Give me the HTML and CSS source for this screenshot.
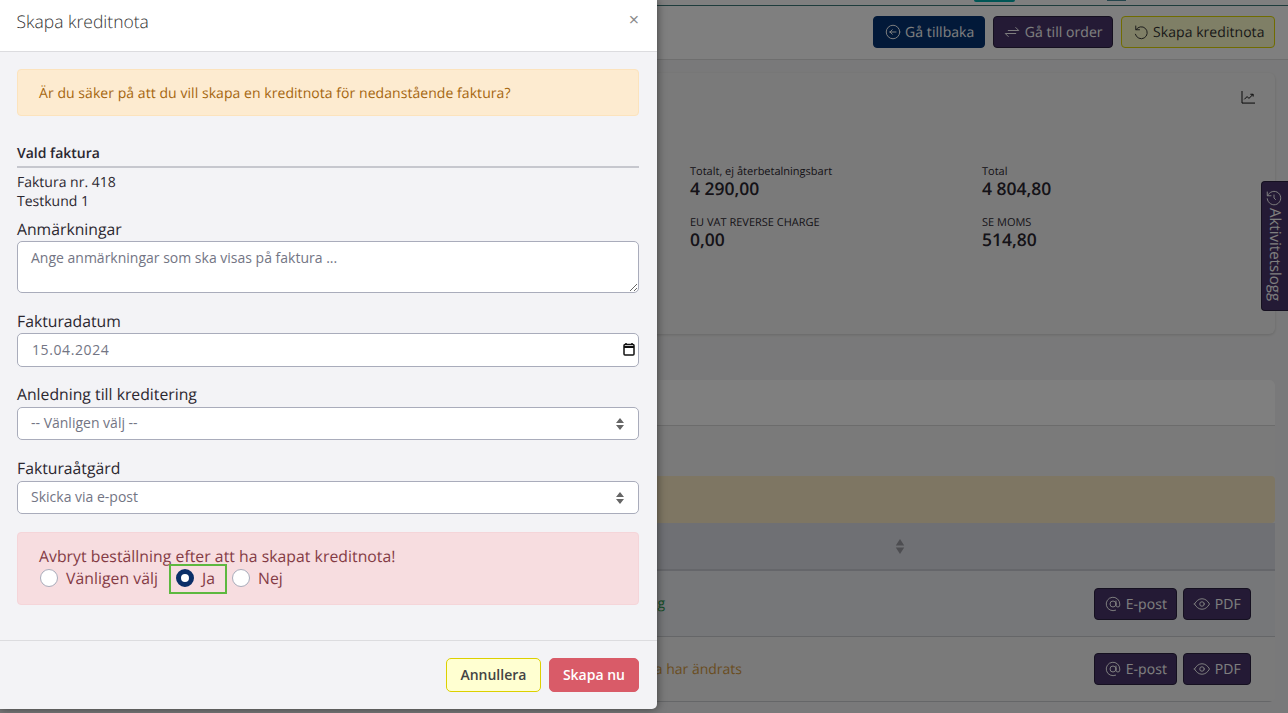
FILE: index.html
```html
<!DOCTYPE html>
<html>
<head>
    <title>Skapa kreditnota</title>
    <link rel="stylesheet" href="styles.css">
</head>
<body>
    <div class="page">
        <div class="topbar">
            <span class="top-pill"></span>
            <span class="top-avatar"></span>
        </div>

        <div class="toolbar">
            <a class="btn btn-navy">
                <svg class="icon" viewBox="0 0 24 24"><circle cx="12" cy="12" r="9"/><path d="M8 12h8M8 12l3-3M8 12l3 3"/></svg>
                Gå tillbaka
            </a>
            <a class="btn btn-purple">
                <svg class="icon" viewBox="0 0 24 24"><path d="M7 10h14l-4-4"/><path d="M17 14H3l4 4"/></svg>
                Gå till order
            </a>
            <a class="btn btn-yellow">
                <svg class="icon" viewBox="0 0 24 24"><path d="M5 4v5h5"/><path d="M5.300 9A8 8 0 1 1 4.500 15"/></svg>
                Skapa kreditnota
            </a>
        </div>

        <div class="card summary">
            <svg class="chart-icon" viewBox="0 0 16 14"><path d="M1 0v13h14"/><path d="M3.500 9l3-3 2 2 4-4M10 3.500h3V6"/></svg>
            <div class="stats">
                <div class="stat">
                    <div class="stat-label">Totalt, ej återbetalningsbart</div>
                    <div class="stat-value">4 290,00</div>
                </div>
                <div class="stat">
                    <div class="stat-label">Total</div>
                    <div class="stat-value">4 804,80</div>
                </div>
                <div class="stat">
                    <div class="stat-label">EU VAT REVERSE CHARGE</div>
                    <div class="stat-value">0,00</div>
                </div>
                <div class="stat">
                    <div class="stat-label">SE MOMS</div>
                    <div class="stat-value">514,80</div>
                </div>
            </div>
        </div>

        <div class="card list">
            <div class="list-header"></div>
            <div class="list-gap"></div>
            <div class="list-warning"></div>
            <div class="list-head">
                <svg class="sort-icon" viewBox="0 0 10 16"><path d="M5 0l4.500 7h-9zM5 16l-4.500-7h9z"/></svg>
            </div>
            <div class="list-row row-first">
                <span class="status status-ok">Betalning</span>
                <a class="btn btn-purple">
                    <svg class="icon" viewBox="0 0 24 24"><circle cx="12" cy="12" r="4"/><path d="M16 8v5.500a2.500 2.500 0 0 0 5 0V12a9 9 0 1 0-5.500 8.300"/></svg>
                    E-post
                </a>
                <a class="btn btn-purple">
                    <svg class="icon" viewBox="0 0 24 24"><circle cx="12" cy="12" r="3"/><path d="M2 12c2.500-4.500 6-7 10-7s7.500 2.500 10 7c-2.500 4.500-6 7-10 7s-7.500-2.500-10-7z"/></svg>
                    PDF
                </a>
            </div>
            <div class="list-row row-second">
                <span class="status status-warn">Data har ändrats</span>
                <a class="btn btn-purple">
                    <svg class="icon" viewBox="0 0 24 24"><circle cx="12" cy="12" r="4"/><path d="M16 8v5.500a2.500 2.500 0 0 0 5 0V12a9 9 0 1 0-5.500 8.300"/></svg>
                    E-post
                </a>
                <a class="btn btn-purple">
                    <svg class="icon" viewBox="0 0 24 24"><circle cx="12" cy="12" r="3"/><path d="M2 12c2.500-4.500 6-7 10-7s7.500 2.500 10 7c-2.500 4.500-6 7-10 7s-7.500-2.500-10-7z"/></svg>
                    PDF
                </a>
            </div>
        </div>
    </div>

    <div class="log-tab">
        <svg class="icon" viewBox="0 0 24 24"><path d="M12 8v4l2 2"/><path d="M3 4v5h5"/><path d="M3.500 9A9 9 0 1 1 3 13"/></svg>
        Aktivitetslogg
    </div>

    <div class="backdrop"></div>

    <div class="modal">
        <div class="modal-header">
            <h5>Skapa kreditnota</h5>
            <span class="modal-close">×</span>
        </div>

        <div class="modal-body">
            <div class="alert alert-warning">Är du säker på att du vill skapa en kreditnota för nedanstående faktura?</div>

            <div class="picked-title">Vald faktura</div>
            <div class="picked-info">
                Faktura nr. 418<br>
                Testkund 1
            </div>

            <label class="field-label field-first" for="notes">Anmärkningar</label>
            <textarea id="notes" class="field field-notes" placeholder="Ange anmärkningar som ska visas på faktura ..."></textarea>

            <label class="field-label" for="date">Fakturadatum</label>
            <div class="date-wrap">
                <input id="date" class="field field-date" type="text" value="15.04.2024">
                <svg class="date-icon" viewBox="0 0 12 13"><path d="M3 0v2M9 0v2"/><rect x="1" y="1.500" width="10" height="10.500" rx="1"/><path class="date-bar" d="M1 4h10"/></svg>
            </div>

            <label class="field-label" for="reason">Anledning till kreditering</label>
            <select id="reason" class="field field-select">
                <option>-- Vänligen välj --</option>
            </select>

            <label class="field-label" for="action">Fakturaåtgärd</label>
            <select id="action" class="field field-select">
                <option>Skicka via e-post</option>
            </select>

            <div class="alert alert-danger">
                <div>Avbryt beställning efter att ha skapat kreditnota!</div>
                <div class="radio-row">
                    <label class="radio"><input type="radio" name="cancel"> Vänligen välj</label>
                    <label class="radio radio-marked"><input type="radio" name="cancel" checked> Ja</label>
                    <label class="radio"><input type="radio" name="cancel"> Nej</label>
                </div>
            </div>
        </div>

        <div class="modal-footer">
            <button class="modal-btn modal-btn-cancel">Annullera</button>
            <button class="modal-btn modal-btn-create">Skapa nu</button>
        </div>
    </div>
</body>
</html>
```

FILE: styles.css
```css
* {
    box-sizing: border-box;
}

html, body {
    height: 100%;
}

body {
    margin: 0;
    height: 713px;
    overflow: hidden;
    font-family: "Open Sans", sans-serif;
    font-size: 14px;
    color: #2b2730;
    background-color: #f3f3f4;
    text-rendering: geometricPrecision;
}

.icon {
    width: 18px;
    height: 18px;
    fill: none;
    stroke: currentColor;
    stroke-width: 1.3;
    stroke-linecap: round;
    stroke-linejoin: round;
    flex: none;
}

/* page behind the dialog */
.topbar {
    height: 6px;
    display: flex;
    align-items: flex-start;
    padding-left: 974px;
    background-color: #fff;
    border-bottom: 1px solid #3c7878;
}

.top-pill {
    width: 41px;
    height: 2px;
    background-color: #0aa;
    border-radius: 0 0 3px 3px;
}

.top-avatar {
    width: 19px;
    height: 1px;
    margin-left: 92px;
    background-color: #4a8a98;
}

.toolbar {
    height: 54px;
    display: flex;
    justify-content: flex-end;
    gap: 8px;
    padding: 10px 13px 0 0;
    background-color: #fff;
    border-bottom: 1px solid #ddd;
}

.btn {
    height: 32px;
    display: inline-flex;
    align-items: center;
    gap: 3.5px;
    padding: 2px 9.5px 0;
    border: 1px solid;
    border-radius: 4px;
    font-size: 14px;
    line-height: 26px;
    letter-spacing: 0.05px;
    white-space: nowrap;
}

.btn .icon {
    margin-bottom: 2px;
}

.btn-navy {
    background-color: #053372;
    border-color: #053372;
    color: #fff;
}

.btn-purple {
    background-color: #48356a;
    border-color: #2b2040;
    color: #fff;
}

.btn-yellow {
    background-color: #ffffcc;
    border-color: #e0d800;
    color: #333;
}

.card {
    margin: 0 13px 0 0;
    background-color: #f5f5f5;
    border-radius: 6px;
}

.summary {
    position: relative;
    height: 261px;
    margin-top: 13px;
    padding: 91px 0 0 690px;
    box-shadow: 0 1px 3px rgba(0,0,0,0.15);
}

.chart-icon {
    position: absolute;
    top: 18px;
    right: 19px;
    width: 15px;
    height: 13px;
    fill: none;
    stroke: #000;
    stroke-width: 1;
}

.stats {
    display: grid;
    grid-template-columns: 292px 292px;
    row-gap: 15px;
}

.stat-label {
    font-size: 11px;
    line-height: 15px;
}

.stat-value {
    font-size: 17.5px;
    font-weight: 600;
    line-height: 21px;
}

.list {
    margin-top: 46px;
    overflow: hidden;
}

.list-header {
    height: 46px;
    background-color: #fff;
    border-bottom: 1px solid #d8d8d8;
}

.list-gap {
    height: 50px;
}

.list-warning {
    height: 47px;
    background-color: #fcecc6;
    border-radius: 4px;
}

.list-head {
    height: 48px;
    display: flex;
    align-items: center;
    padding-left: 895px;
    background-color: #dee0e8;
    border-bottom: 2px solid #cbccd4;
}

.sort-icon {
    width: 10px;
    height: 15px;
    fill: #9a9ba2;
}

.list-row {
    height: 65px;
    display: flex;
    align-items: center;
    justify-content: flex-end;
    gap: 6px;
    padding-right: 24px;
    background-color: #f4f4f5;
    border-bottom: 1px solid #cbccd0;
}

.row-first {
    height: 66px;
    background-color: #eceef2;
}

.status {
    margin-right: auto;
    text-align: right;
}

.row-first .status {
    width: 665px;
}

.row-second .status {
    width: 742px;
}

.status-ok {
    color: #2a9a50;
}

.status-warn {
    color: #d49a40;
}

.list-row .btn {
    padding: 2px 9.2px 0;
}

.log-tab {
    position: absolute;
    top: 181px;
    right: 0;
    width: 27px;
    height: 130px;
    display: flex;
    align-items: center;
    gap: 1px;
    padding: 7px 2px 0 0;
    writing-mode: vertical-rl;
    background-color: #48356a;
    border: 1px solid #2b2040;
    border-right: none;
    border-radius: 4px 0 0 4px;
    color: #fff;
    font-size: 15px;
    line-height: 25px;
}

.backdrop {
    position: absolute;
    inset: 0;
    background-color: rgba(0,0,0,0.5);
}

/* dialog */
.modal {
    position: absolute;
    top: 0;
    left: 0;
    width: 657px;
    height: 709px;
    display: flex;
    flex-direction: column;
    background-color: #f3f3f6;
    border-radius: 0 0 5px 0;
    box-shadow: 0 0 10px rgba(0,0,0,0.5);
}

.modal-header {
    height: 52px;
    flex: none;
    display: flex;
    align-items: flex-start;
    justify-content: space-between;
    padding: 0 17px 0 16.500px;
    background-color: #fff;
    border-bottom: 1px solid #dcdcdf;
}

.modal-header h5 {
    margin: 10px 0 0;
    font-size: 17.5px;
    font-weight: 300;
    line-height: 24px;
    color: #333;
}

.modal-close {
    margin: 8px 1px 0 0;
    font-size: 18px;
    line-height: 24px;
    color: #888;
}

.modal-body {
    flex: 1;
    padding: 17px 18px 0 17px;
}

.alert {
    border: 1px solid;
    border-radius: 4px;
    padding: 0 21px;
}

.alert-warning {
    height: 47px;
    line-height: 47px;
    letter-spacing: 0.055px;
    background-color: #fdebd0;
    border-color: #fce3bd;
    color: #a5660f;
}

.picked-title {
    margin-top: 28px;
    padding-bottom: 3px;
    font-weight: 600;
    line-height: 19px;
    border-bottom: 2px solid #c6c7ce;
}

.picked-info {
    margin-top: 5px;
    line-height: 19px;
}

.field-label {
    display: block;
    margin: 17px 0 0;
    font-size: 15.75px;
    line-height: 22px;
}

.field-first {
    margin-top: 7px;
}

.date-wrap + .field-label {
    margin-top: 16px;
}

.field {
    display: block;
    width: 100%;
    margin-top: 1px;
    border: 1px solid #a9acbb;
    border-radius: 5px;
    background-color: #fff;
    font-family: "Open Sans", sans-serif;
    font-size: 14px;
    color: #737584;
}

.field-notes {
    height: 52px;
    padding: 6px 13px;
}

.field-notes::placeholder {
    color: #737584;
}

.date-wrap {
    position: relative;
}

.field-date {
    height: 34px;
    padding: 0 14px 2px;
    letter-spacing: 0.6px;
}

.date-icon {
    position: absolute;
    top: 10px;
    right: 4px;
    width: 12px;
    height: 13px;
    fill: none;
    stroke: #111;
    stroke-width: 1.5;
}

.date-bar {
    stroke-width: 2;
}

.field-select {
    height: 33px;
    margin-top: 2px;
    padding: 0 13px 2px;
    appearance: none;
    background-image: url("data:image/svg+xml,%3Csvg xmlns='http://www.w3.org/2000/svg' viewBox='0 0 8 12'%3E%3Cpath fill='%23666' d='M4 0l4 5H0zM4 12L0 7h8z'/%3E%3C/svg%3E");
    background-repeat: no-repeat;
    background-position: right 14px center;
    background-size: 8px 12px;
}

.alert-danger {
    height: 73px;
    margin-top: 18px;
    padding-top: 12px;
    font-size: 15.75px;
    line-height: 22px;
    letter-spacing: 0.04px;
    background-color: #f7dde0;
    border-color: #f5d5d9;
    color: #843b45;
}

.radio-row {
    display: flex;
    align-items: center;
    gap: 5px;
    margin: -3px 0 0 1px;
}

.radio {
    height: 30px;
    display: flex;
    align-items: center;
    gap: 8px;
    padding: 0 6px 2px 0;
}

.radio input {
    width: 18px;
    height: 18px;
    margin: 0 0 1px;
    appearance: none;
    background-color: #fff;
    border: 1px solid #a9acbb;
    border-radius: 50%;
}

.radio input:checked {
    background-color: #fff;
    border: 5px solid #0b2f68;
}

.radio-marked {
    width: 58px;
    padding-left: 5px;
    border: 2px solid #5db83f;
}

.modal-footer {
    height: 69px;
    flex: none;
    display: flex;
    justify-content: flex-end;
    gap: 8px;
    padding: 17px 18px 0 0;
    border-top: 1px solid #dcdcdf;
}

.modal-btn {
    height: 34px;
    padding: 0 13px 2px;
    border: 1px solid;
    border-radius: 5px;
    font-family: "Open Sans", sans-serif;
    font-size: 14px;
    font-weight: 600;
}

.modal-btn-cancel {
    padding: 0 13.5px 2px;
    background-color: #ffffd1;
    border-color: #dcd000;
    color: #444;
}

.modal-btn-create {
    background-color: #d95b68;
    border-color: #d95b68;
    color: #fff;
}
```
